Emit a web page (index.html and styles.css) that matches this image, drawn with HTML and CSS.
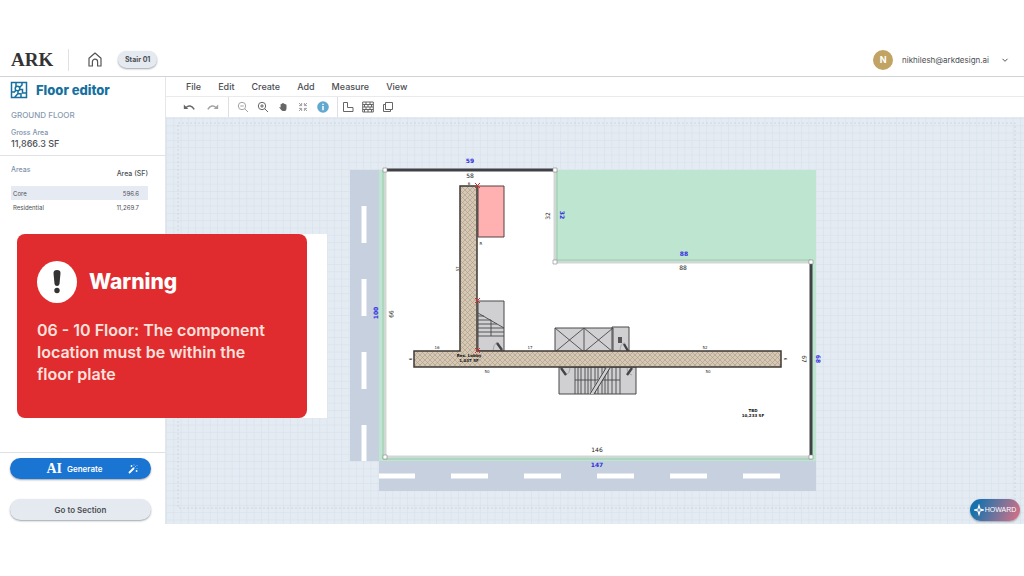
FILE: index.html
```html
<!DOCTYPE html>
<html lang="en">
<head>
<meta charset="utf-8">
<meta name="viewport" content="width=device-width, initial-scale=1">
<title>ARK – Floor editor</title>
<link rel="stylesheet" href="styles.css">
</head>
<body>
<div class="app">
  <header class="topbar">
    <a class="logo" href="#">ARK</a>
    <a class="home" href="#" aria-label="Home">
      <svg class="home-icon" viewBox="0 0 14 15"><path d="M1 6.2 7 1l6 5.2V14H9.6V9.8a2.6 2.6 0 0 0-5.2 0V14H1z"/></svg>
    </a>
    <button class="chip" type="button">Stair 01</button>
    <button class="account" type="button">
      <span class="avatar">N</span>
      <span>nikhilesh@arkdesign.ai</span>
      <svg class="chevron" viewBox="0 0 8 8"><path d="M1.5 2.8 4 5.3l2.5-2.5"/></svg>
    </button>
  </header>

  <aside class="sidebar">
    <h1 class="title">
      <svg class="title-icon" viewBox="0 0 18 18"><path d="M1.500 1.500h15v15h-15zM6 1.500v4M8 9.500v3l-3.500 4M1.500 11h3l1.500-2M9.500 6.500 12 4V1.500M10 8.500h2.500V12h4M8 12.500l3 .5v3.500"/><circle cx="7.500" cy="7.500" r="2.300"/></svg>
      Floor editor
    </h1>
    <p class="floor-name">GROUND FLOOR</p>
    <p class="gross-label">Gross Area</p>
    <p class="gross-value">11,866.3 SF</p>
    <table class="areas">
      <thead><tr><th scope="col">Areas</th><th scope="col">Area (SF)</th></tr></thead>
      <tbody>
        <tr class="selected"><td>Core</td><td>596.6</td></tr>
        <tr><td>Residential</td><td>11,269.7</td></tr>
      </tbody>
    </table>
    <div class="actions">
      <button class="generate" type="button">
        <span class="ai">AI</span><span>Generate</span>
        <svg class="wand" viewBox="0 0 10 10"><path class="wand-stick" d="M1 9l5-5"/><path d="M6.6 3.4l1-1M3.5 1v2M2.5 2h2M8.6 6v2M7.6 7h2M6 .6v.8M9 1v.6M9 4.2v.6"/></svg>
      </button>
      <button class="section-link" type="button">Go to Section</button>
    </div>
  </aside>

  <main class="workspace">
    <nav class="menu" aria-label="Editor menu">
      <button type="button">File</button>
      <button type="button">Edit</button>
      <button type="button">Create</button>
      <button type="button">Add</button>
      <button type="button">Measure</button>
      <button type="button">View</button>
    </nav>
    <div class="toolbar" role="toolbar" aria-label="Tools">
      <div class="tools history">
        <button type="button" aria-label="Undo"><svg viewBox="0 0 12 12"><path class="solid" d="M.8 3.500v4.500h4.500z"/><path class="thick" d="M3 6.500c2.500-2.300 6-2 8.200 1.800"/></svg></button>
        <button class="dim" type="button" aria-label="Redo"><svg viewBox="0 0 12 12"><path class="solid" d="M11.200 3.500v4.500H6.700z"/><path class="thick" d="M9 6.500C6.500 4.200 3 4.500.8 8.300"/></svg></button>
      </div>
      <div class="tools view">
        <button class="dim" type="button" aria-label="Zoom out"><svg viewBox="0 0 12 12"><circle cx="5" cy="5" r="3.700"/><path d="M7.800 7.800l3.200 3.200M3.300 5h3.400"/></svg></button>
        <button type="button" aria-label="Zoom in"><svg viewBox="0 0 12 12"><circle cx="5" cy="5" r="3.700"/><path d="M7.800 7.800l3.200 3.200M3.200 5h3.600M5 3.200v3.600"/></svg></button>
        <button type="button" aria-label="Pan"><svg viewBox="0 0 12 12"><path class="solid" d="M3.600 3.200q.8-.8 1.400 0 .2-1.300 1-1.100.8-.2 1 .8.900-.6 1.200.4 1.200-.3 1.300.9v3.200Q9.300 10 7.800 10H5.500Q4.300 9.600 2.300 6.600q.2-1 1.300 0z"/></svg></button>
        <button class="dim" type="button" aria-label="Fit to screen"><svg viewBox="0 0 12 12"><path d="M2 2l2.500 2.500M10 2 7.500 4.500M2 10l2.500-2.500M10 10 7.500 7.500M4.600 2v2.600H2M7.400 2v2.600H10M4.600 10V7.400H2M7.400 10V7.400H10"/></svg></button>
        <button type="button" aria-label="Information"><svg viewBox="0 0 12 12"><circle class="info-disc" cx="6" cy="6" r="5.800"/><path class="info-mark" d="M6 2.700v1.300M6 5v4.300"/></svg></button>
      </div>
      <div class="tools shapes">
        <button type="button" aria-label="Floor shape"><svg viewBox="0 0 12 12"><path d="M1.500 1.500h4v5h5.500v4H1.500z"/></svg></button>
        <button type="button" aria-label="Walls"><svg viewBox="0 0 12 12"><path d="M.7 1h10.600v10H.7zM.7 3.500h10.600M.7 6h10.600M.7 8.500h10.600M4 1v2.500M8 1v2.500M2.500 3.500V6M6 3.500V6M9.500 3.500V6M4 6v2.500M8 6v2.500M2.500 8.500V11M6 8.500V11M9.500 8.500V11"/></svg></button>
        <button type="button" aria-label="Duplicate"><svg viewBox="0 0 12 12"><path d="M3.500 1.500h7v7h-7zM1.500 3.500v7h7v-2M1.500 3.500h2"/></svg></button>
      </div>
    </div>

    <div class="canvas">
      <svg class="plan" viewBox="166 117 858 407" role="img" aria-label="Ground floor plan">
        <defs>
          <pattern id="grid" width="7.300" height="7.300" patternUnits="userSpaceOnUse" x="166" y="118"><path class="grid-line" d="M0 .5h7.300M.5 0v7.300"/></pattern>
          <pattern id="weave" width="5" height="5" patternUnits="userSpaceOnUse"><path class="weave-base" d="M0 0h5v5H0z"/><path class="weave-line" d="M0 0l5 5M5 0 0 5"/></pattern>
        </defs>
        <rect x="166" y="117" width="858" height="407" fill="url(#grid)"/>
        <path class="margin" d="M178 123h837v385H178z"/>

        <path class="road" d="M350 170h29v291h-29zM379 461h437v30H379z"/>
        <path class="lane" d="M364 206v37M364 279v37M364 352v37M364 425v36"/>
        <path class="lane" d="M379 476h36M451 476h37M524 476h37M597 476h37M670 476h37M743 476h37"/>
        <path class="lot" d="M379 170h437v291H379z"/>
        <path class="floor" d="M385 170h170v92h256v195H385z"/>
        <path class="edge" d="M555 170v92h256M811 457H385V170"/>
        <path class="edge-rule" d="M383 170v289h429M557 171v89h254"/>
        <path class="wall" d="M386 170h168M811 264v191"/>
        <path class="node" d="M383 168h4v4h-4zM553 168h4v4h-4zM553 260h4v4h-4zM809 260h4v4h-4zM809 455h4v4h-4zM383 455h4v4h-4z"/>

        <path class="unit" d="M478 186h26v51h-26z"/>
        <g class="core">
          <path d="M478 301h26v50h-26zM555 328h58v24h-58zM612 327h17v25h-17zM559 367h77v27h-77z"/>
          <path d="M478 313l26 15M478 316h6M478 320h13M478 324h19M478 328h26M478 332h26M478 336h26M491 320v16"/>
          <path d="M555 328l29 24M584 328l-29 24M584 328l29 24M613 328l-29 24M584 328v24"/>
          <path d="M575 367v27M578 367v27M581 367v27M585 367v27M588 367v27M591 367v27M595 367v27M598 367v27M602 367v27M605 367v27M608 367v27M612 367v27M616 367v27M620 367v27M575 380h45"/>
        </g>
        <path class="break-fill" d="M589 394l17-27h4l-16 27z"/>
        <path class="break" d="M590 394l16-26M594 394l16-26"/>
        <path class="swing" d="M493 351q0-6 4-9M620 351q0-8 5-8M570 367q0 7-5 8M627 367q0 7 5 8"/>
        <path class="door" d="M497 343l5 7M624 344l4 7M561 368l5 7M632 368l-5 7"/>
        <path class="shaft" d="M618 337h4v6h-4z"/>
        <path class="corridor" d="M460 186h17v165h304v16H414v-16h46z"/>
        <path class="marker" d="M475 183l5 5m0-5-5 5M475 298l5 5m0-5-5 5M475 348l5 5m0-5-5 5"/>

        <g class="lot-label">
          <text x="470" y="163">59</text>
          <text x="684" y="256">88</text>
          <text x="597" y="467">147</text>
          <text transform="translate(378 313) rotate(-90)">100</text>
          <text transform="translate(560 215) rotate(90)">32</text>
          <text transform="translate(816 359) rotate(90)">68</text>
        </g>
        <g class="floor-label">
          <text x="470" y="178">58</text>
          <text x="683" y="270">88</text>
          <text x="597" y="452">146</text>
          <text transform="translate(389 314) rotate(90)">99</text>
          <text transform="translate(550 216) rotate(-90)">32</text>
          <text transform="translate(802 359) rotate(90)">67</text>
        </g>
        <g class="part-label">
          <text x="469" y="185">6</text>
          <text x="481" y="245">R</text>
          <text x="437" y="349">16</text>
          <text x="530" y="349">17</text>
          <text x="705" y="349">52</text>
          <text x="487" y="373">50</text>
          <text x="708" y="373">50</text>
          <text transform="translate(459 269) rotate(-90)">57</text>
          <text transform="translate(412 359) rotate(-90)">6</text>
          <text transform="translate(784 359) rotate(90)">6</text>
        </g>
        <g class="room-label">
          <text x="469" y="357">Res. Lobby</text>
          <text x="469" y="362">1,037 SF</text>
          <text x="753" y="412">TBD</text>
          <text x="753" y="417">10,233 SF</text>
        </g>
      </svg>
      <button class="assistant" type="button">
        <svg class="spark" viewBox="0 0 12 12"><path d="M6 .5 7.200 4.800 11.500 6 7.200 7.200 6 11.500 4.800 7.200.5 6l4.300-1.200z"/></svg>
        <span>HOWARD</span>
      </button>
    </div>
  </main>

  <div class="notice" role="alert">
    <div class="warning">
      <h2 class="warning-title">
        <svg class="warning-icon" viewBox="0 0 40 42"><ellipse class="warning-disc" cx="20" cy="21" rx="20" ry="21"/><path d="M16.500 12q0-3 3.500-3t3.500 3l-1 11q-.5 2-2.500 2t-2.500-2z"/><circle cx="20" cy="29.500" r="2.700"/></svg>
        Warning
      </h2>
      <p class="warning-text">06 - 10 Floor: The component location must be within the floor plate</p>
    </div>
  </div>
</div>
</body>
</html>
```
FILE: styles.css
```css
* { box-sizing: border-box; }

body {
  margin: 0;
  background: #fff;
  color: #4c4f54;
  font-family: Inter, "Open Sans", sans-serif;
  font-size: 8px;
}

h1, h2, p { margin: 0; }
a { color: inherit; text-decoration: none; }
svg { display: block; }

button {
  padding: 0;
  border: 0;
  background: none;
  color: inherit;
  font: inherit;
  cursor: pointer;
}

.app {
  position: relative;
  display: grid;
  grid-template: 33px minmax(0, 1fr) / 166px minmax(0, 1fr);
  height: calc(100vh - 96px);
  min-height: 440px;
  margin: 44px 0 52px;
}

/* Top bar */
.topbar {
  grid-column: 1 / -1;
  display: flex;
  align-items: center;
  padding: 0 15px 1px 11px;
  border-bottom: 1px solid #d0d2d5;
}

.logo {
  width: 58px;
  border-right: 1px solid #dfe1e4;
  color: #333;
  font: bold 19px/22px "Liberation Serif", serif;
}

.home { margin-left: 19px; }
.home-icon { width: 14px; height: 15px; fill: none; stroke: #555; stroke-width: 1.2; stroke-linejoin: round; }

.chip {
  height: 17px;
  margin-left: 16px;
  padding: 0 7px;
  border-radius: 9px;
  background: #e5e9f0;
  box-shadow: 0 1px 2px #9da3ad;
  font-size: 7px;
  font-weight: 700;
}

.account { display: flex; align-items: center; margin-left: auto; }

.avatar {
  width: 20px;
  margin-right: 9px;
  border-radius: 50%;
  background: #c1a464;
  color: #fff;
  font-size: 9px;
  font-weight: 700;
  line-height: 20px;
}

.chevron { width: 8px; height: 8px; margin-left: 12px; fill: none; stroke: #555; }

/* Sidebar */
.sidebar {
  display: flex;
  flex-direction: column;
  border-right: 1px solid #e3e6ea;
}

.title {
  display: flex;
  align-items: center;
  gap: 8px;
  padding: 4px 10px 0;
  color: #16709f;
  font-size: 13px;
  font-weight: 800;
  line-height: 18px;
}

.title-icon { width: 18px; height: 18px; fill: none; stroke: currentColor; stroke-width: 1.5; }

.floor-name, .gross-label, .gross-value { padding-left: 11px; }

.floor-name {
  padding-top: 11px;
  color: #8a9bb0;
  font-size: 8px;
  font-weight: 500;
  line-height: 10px;
}

.gross-label { padding-top: 8px; color: #8093aa; font-size: 7px; font-weight: 500; line-height: 10px; }

.gross-value {
  padding-bottom: 6px;
  border-bottom: 1px solid #dfe2e6;
  font-size: 9px;
  font-weight: 500;
  line-height: 11px;
}

.areas {
  margin: 9px 17px 0 11px;
  border-collapse: collapse;
  font-size: 6px;
}

.areas th { height: 21px; padding: 0 0 12px; color: #8093aa; font-size: 7px; font-weight: 500; line-height: 9px; text-align: left; }
.areas th:last-child { padding: 4px 0 8px; color: #4c4f54; text-align: right; }
.areas td { height: 14px; padding: 0 2px; }
.areas td:last-child { padding-right: 9px; text-align: right; }
.areas .selected { background: #e6eaf2; }

.actions {
  display: flex;
  flex-direction: column;
  gap: 20px;
  margin-top: auto;
  padding: 5px 14px 4px 10px;
  border-top: 1px solid #dde2e7;
}

.generate, .section-link {
  height: 21px;
  border-radius: 11px;
  box-shadow: 0 1px 2px #9da3ad;
  font-weight: 600;
  font-size: 8px;
}

.generate {
  display: grid;
  grid-template-columns: 52px auto 1fr auto;
  align-items: center;
  column-gap: 5px;
  padding-right: 13px;
  background: #1974d2;
  color: #fff;
  text-align: left;
}

.ai { font: bold 14px/20px "Liberation Serif", serif; text-align: right; }
.wand { grid-column: 4; width: 10px; height: 10px; fill: none; stroke: #fff; stroke-width: .8; }
.wand-stick { stroke-width: 1.8; }
.section-link { background: #e5e9f0; }

/* Menu and tools */
.workspace { display: flex; flex-direction: column; min-width: 0; }

.menu {
  display: flex;
  gap: 17px;
  height: 20px;
  padding: 0 20px 1px;
  border-bottom: 1px solid #e8eaed;
  font-size: 9px;
  font-weight: 500;
}

.toolbar { display: flex; height: 20px; }
.tools { display: flex; align-items: center; gap: 8px; }
.history { gap: 12px; padding: 0 9px 0 17px; }
.view { padding: 0 8px; border: solid #dcdfe3; border-width: 0 1px; }
.shapes { padding-left: 4px; }
.tools svg { width: 12px; height: 12px; fill: none; stroke: #666; }
.tools .dim { opacity: .6; }
.tools .solid { fill: #666; stroke: none; }
.tools .thick { stroke-width: 1.5; }
.tools .info-disc { fill: #61a9cf; stroke: none; }
.tools .info-mark { stroke: #fff; stroke-width: 1.5; }

/* Drawing canvas */
.canvas { position: relative; flex: 1; min-height: 0; background: #e4ebf2; }
.plan { width: 100%; height: 100%; }
.grid-line { fill: none; stroke: #d8e0e9; stroke-width: .6; }
.margin { fill: none; stroke: #c8d0da; stroke-dasharray: 2 2; stroke-width: .8; }
.road { fill: #c6d0de; }
.lane { fill: none; stroke: #fff; stroke-width: 5; }
.lot { fill: #bde5d0; }
.floor { fill: #fff; }
.edge { fill: none; stroke: #d0d8d3; stroke-width: 3; }
.edge-rule { fill: none; stroke: #8fc7a6; stroke-width: .8; }
.wall { fill: none; stroke: #3f4144; stroke-width: 3; }
.node { fill: #fff; stroke: #888; stroke-width: .6; }
.unit { fill: #ffb1b1; stroke: #544040; }
.core { fill: #d0cfd1; stroke: #48484a; }
.core path + path { fill: none; stroke-width: .9; }
.break-fill { fill: #d0cfd1; }
.break { stroke: #444; }
.swing { fill: none; stroke: #909092; stroke-width: .7; }
.door { stroke: #454547; stroke-width: 2.4; }
.shaft { fill: #555; }
.corridor { fill: url(#weave); stroke: #3d3834; stroke-width: 1.5; }
.weave-base { fill: #d5c8b5; }
.weave-line { fill: none; stroke: #ac9a85; stroke-width: .6; }
.marker { fill: none; stroke: #e02a2a; }
.plan text { font-family: "DejaVu Sans", sans-serif; text-anchor: middle; }
.lot-label { fill: #3131e0; font-size: 6px; font-weight: 700; }
.floor-label { fill: #222; font-size: 6px; }
.part-label { fill: #222; font-size: 4px; }
.room-label { fill: #111; font-size: 4px; font-weight: 700; }

.assistant {
  position: absolute;
  right: 4px;
  bottom: 3px;
  display: flex;
  align-items: center;
  justify-content: center;
  gap: 1px;
  width: 50px;
  height: 22px;
  border-radius: 11px;
  background: linear-gradient(115deg, #1771ad 15%, #75739b 55%, #e06f83);
  box-shadow: 0 1px 2px #9da3ad;
  color: #fff;
  font: 7px/22px "Liberation Sans Narrow", "Liberation Sans", sans-serif;
}

.spark { width: 10px; height: 12px; fill: none; stroke: #fff; stroke-width: 1.3; }

/* Warning notice */
.notice {
  position: absolute;
  top: 190px;
  left: 17px;
  width: 310px;
  padding-right: 20px;
  background: #fff;
}

.warning {
  padding: 27px 40px 33px 20px;
  border-radius: 8px;
  background: #e02c2e;
  color: #fff;
}

.warning-title { display: flex; align-items: center; gap: 12px; font-size: 21px; font-weight: 800; line-height: 42px; }
.warning-icon { width: 40px; height: 42px; fill: #333; }
.warning-disc { fill: #fff; }
.warning-text { padding-top: 16px; color: #ffe1de; font-size: 16px; font-weight: 600; line-height: 22px; }
```
